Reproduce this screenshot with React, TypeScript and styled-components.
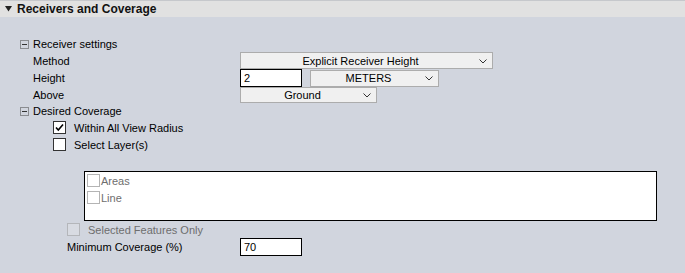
import React from "react";
import styled, { createGlobalStyle } from "styled-components";

const Global = createGlobalStyle`
  html, body { margin: 0; padding: 0; background: #d1d5de; }
  body { font-family: "Liberation Sans", Arial, sans-serif; font-size: 11px; color: #000; }
`;

const Page = styled.div`
  width: 685px;
  height: 273px;
  background: #d1d5de;
  overflow: hidden;
`;

const Header = styled.div`
  height: 17px;
  box-sizing: border-box;
  background: #e1e1e1;
  border-top: 1px solid #c6c8cc;
  display: flex;
  align-items: center;
  gap: 5px;
  padding-left: 5px;
`;

const Title = styled.span`
  font-weight: bold;
  font-size: 12px;
  color: #111;
`;

const Body = styled.div`
  padding-top: 19px;
  display: flex;
  flex-direction: column;
`;

const Row = styled.div<{ $h: number; $indent?: number }>`
  height: ${(p) => p.$h}px;
  display: grid;
  grid-template-columns: ${(p) => 240 - (p.$indent ?? 33)}px 1fr;
  padding-left: ${(p) => p.$indent ?? 33}px;
  align-items: center;
`;

const TreeRow = styled.div<{ $h: number }>`
  height: ${(p) => p.$h}px;
  display: flex;
  align-items: center;
  padding-left: 20px;
  gap: 4px;
`;

const MinusBox = styled.span`
  width: 9px;
  height: 9px;
  box-sizing: border-box;
  border: 1px solid #8a8c90;
  position: relative;
  &::after {
    content: "";
    position: absolute;
    left: 1px;
    right: 1px;
    top: 3px;
    height: 1px;
    background: #333;
  }
`;

const Controls = styled.div`
  display: flex;
  align-items: center;
  gap: 8px;
`;

const Select = styled.div<{ $w: number; $h?: number }>`
  width: ${(p) => p.$w}px;
  height: ${(p) => p.$h ?? 17}px;
  box-sizing: border-box;
  background: #f0f0f0;
  border: 1px solid #acacac;
  display: flex;
  align-items: center;
  position: relative;
  font-size: 11px;
  span { flex: 1; text-align: center; padding-right: 12px; }
  svg { position: absolute; right: 5px; top: 50%; margin-top: -2px; }
`;

const Input = styled.div<{ $w: number }>`
  width: ${(p) => p.$w}px;
  height: 18px;
  box-sizing: border-box;
  background: #fff;
  border: 1px solid #000;
  display: flex;
  align-items: center;
  padding-left: 3px;
  font-size: 11px;
`;

const CheckRow = styled.div<{ $h: number; $indent: number; $disabled?: boolean }>`
  height: ${(p) => p.$h}px;
  display: flex;
  align-items: center;
  padding-left: ${(p) => p.$indent}px;
  gap: 8px;
  color: ${(p) => (p.$disabled ? "#6e6e6e" : "#000")};
`;

const Box = styled.span<{ $disabled?: boolean }>`
  width: 13px;
  height: 13px;
  box-sizing: border-box;
  border: 1px solid ${(p) => (p.$disabled ? "#b4b6ba" : "#333")};
  background: ${(p) => (p.$disabled ? "#d8dbe2" : "#fff")};
  display: flex;
  align-items: center;
  justify-content: center;
`;

const ListBox = styled.div`
  margin-left: 84px;
  margin-top: 18px;
  width: 573px;
  height: 50px;
  box-sizing: border-box;
  background: #fff;
  border: 1px solid #000;
  padding: 0 0 0 2px;
  display: flex;
  flex-direction: column;
`;

const ListItem = styled.div`
  height: 17px;
  display: flex;
  align-items: center;
  gap: 1px;
  color: #6e6e6e;
`;

const SmallBox = styled.span`
  width: 13px;
  height: 13px;
  box-sizing: border-box;
  border: 1px solid #b4b4b4;
  background: #fff;
`;

const Chevron = () => (
  <svg width="8" height="5" viewBox="0 0 8 5">
    <path d="M0.5 0.5 L4 4 L7.5 0.5" fill="none" stroke="#333" strokeWidth="1" />
  </svg>
);

const Check = () => (
  <svg width="9" height="9" viewBox="0 0 9 9">
    <path d="M1 4.5 L3.3 7 L8 1.5" fill="none" stroke="#000" strokeWidth="1.6" />
  </svg>
);

const Triangle = () => (
  <svg width="7" height="6" viewBox="0 0 7 6">
    <path d="M0 0 L7 0 L3.5 5.5 Z" fill="#222" />
  </svg>
);

export default function App() {
  return (
    <Page>
      <Global />
      <Header>
        <Triangle />
        <Title>Receivers and Coverage</Title>
      </Header>
      <Body>
        <TreeRow $h={16}>
          <MinusBox />
          <span>Receiver settings</span>
        </TreeRow>
        <Row $h={17}>
          <span>Method</span>
          <Controls>
            <Select $w={253}>
              <span>Explicit Receiver Height</span>
              <Chevron />
            </Select>
          </Controls>
        </Row>
        <Row $h={17}>
          <span>Height</span>
          <Controls>
            <Input $w={62}>2</Input>
            <Select $w={129}>
              <span>METERS</span>
              <Chevron />
            </Select>
          </Controls>
        </Row>
        <Row $h={17}>
          <span>Above</span>
          <Controls>
            <Select $w={137} $h={16}>
              <span>Ground</span>
              <Chevron />
            </Select>
          </Controls>
        </Row>
        <TreeRow $h={16}>
          <MinusBox />
          <span>Desired Coverage</span>
        </TreeRow>
        <CheckRow $h={17} $indent={53}>
          <Box>
            <Check />
          </Box>
          <span>Within All View Radius</span>
        </CheckRow>
        <CheckRow $h={17} $indent={53}>
          <Box />
          <span>Select Layer(s)</span>
        </CheckRow>
        <ListBox>
          <ListItem>
            <SmallBox />
            <span>Areas</span>
          </ListItem>
          <ListItem>
            <SmallBox />
            <span>Line</span>
          </ListItem>
        </ListBox>
        <CheckRow $h={17} $indent={67} $disabled>
          <Box $disabled />
          <span>Selected Features Only</span>
        </CheckRow>
        <Row $h={18} $indent={67}>
          <span>Minimum Coverage (%)</span>
          <Controls>
            <Input $w={62}>70</Input>
          </Controls>
        </Row>
      </Body>
    </Page>
  );
}
